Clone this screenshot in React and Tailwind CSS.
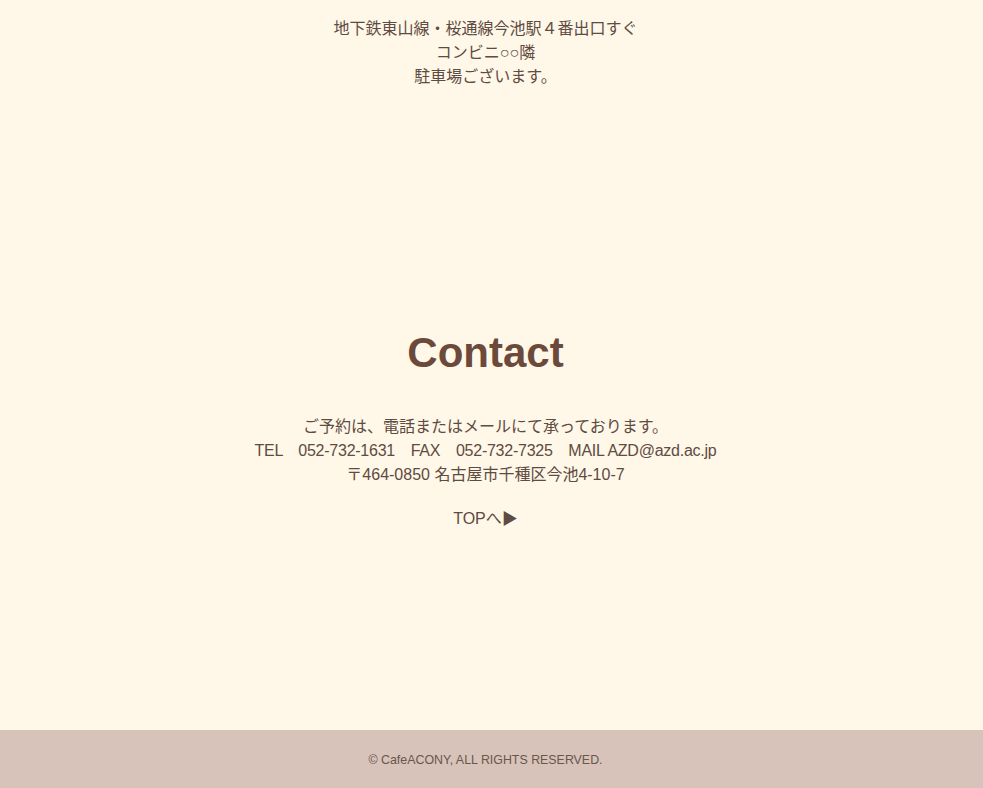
export default function App() {
  const font = { fontFamily: '"Liberation Sans", "Noto Sans CJK JP", sans-serif' };
  return (
    <div className="min-h-screen flex flex-col bg-[#fff7e7] text-[#5e4b42]" style={font}>
      <main className="flex-1 flex flex-col items-center pt-[17px] pr-[12px] text-[16px] leading-[24px] text-center">
        <p>
          地下鉄東山線・桜通線今池駅４番出口すぐ<br />
          コンビニ○○隣<br />
          駐車場ございます。
        </p>
        <h2 className="mt-[236px] h-[56px] leading-[56px] text-[42px] font-bold text-[#6b4a3b]">Contact</h2>
        <p className="mt-[34px]">
          ご予約は、電話またはメールにて承っております。<br />
          <span className="tracking-[-0.25px]">TEL　052-732-1631　FAX　052-732-7325　MAIL AZD@azd.ac.jp</span><br />
          〒464-0850 名古屋市千種区今池4-10-7
        </p>
        <a className="mt-[20px]" href="#">TOPへ▶</a>
      </main>
      <footer className="h-[58px] pt-[3px] pr-[12px] bg-[#d7c3ba] flex items-center justify-center text-[12.4px] text-[#6a564c]">
        © CafeACONY, ALL RIGHTS RESERVED.
      </footer>
    </div>
  );
}
